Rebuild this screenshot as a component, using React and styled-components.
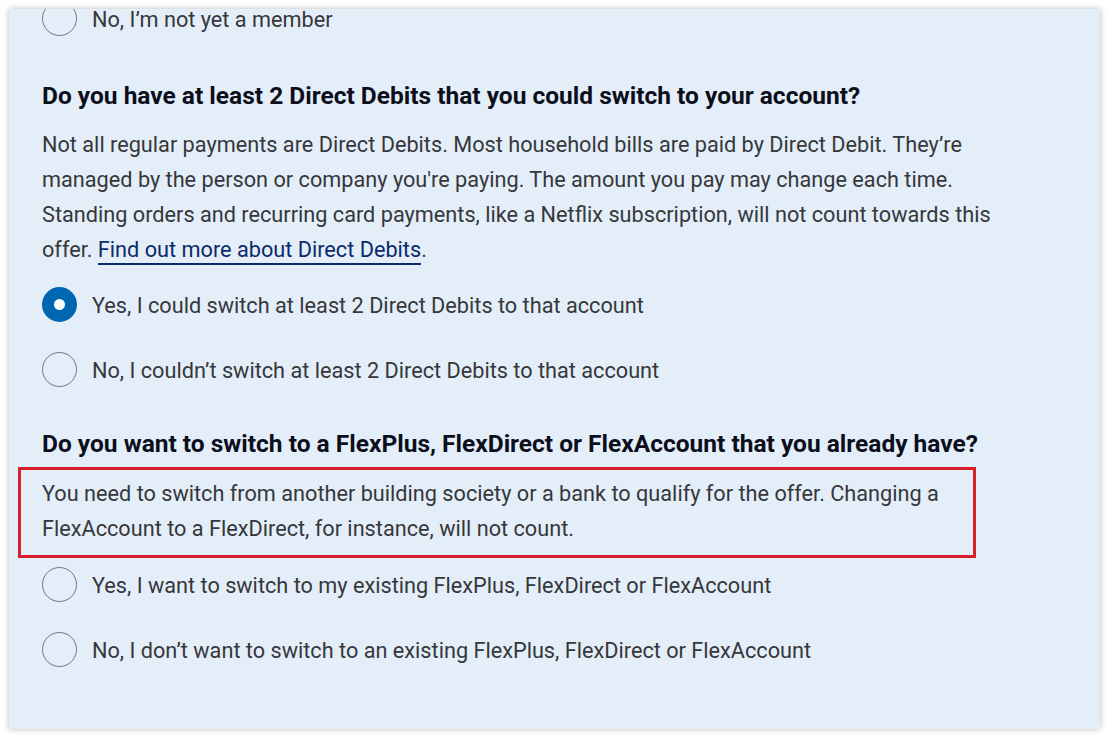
import React from "react";
import styled, { createGlobalStyle } from "styled-components";

const GlobalStyle = createGlobalStyle`
    html, body {
        margin: 0;
        padding: 0;
        background: #ffffff;
    }
    * {
        box-sizing: border-box;
    }
`;

const Page = styled.div`
    width: 1108px;
    height: 737px;
    padding: 9px 8px 8px 9px;
`;

const Panel = styled.section`
    height: 720px;
    background: #e3eef8;
    box-shadow: 0 0 6px rgba(0, 0, 0, 0.28);
    overflow: hidden;
    padding: 0 0 0 33px;
    font-family: Roboto, "Liberation Sans", sans-serif;
    color: #36373b;
`;

const Content = styled.div`
    margin-top: -8px;
    width: 975px;
    display: flex;
    flex-direction: column;
`;

const Question = styled.fieldset`
    border: 0;
    margin: ${({ $top }) => $top}px 0 0;
    padding: 0;
    display: flex;
    flex-direction: column;
`;

const Heading = styled.h2`
    margin: 0;
    font-size: 24.5px;
    line-height: 30px;
    font-weight: 700;
    color: #0d0e1c;
    white-space: nowrap;
`;

const Body = styled.p`
    margin: ${({ $top }) => $top || 0}px 0 0;
    padding-top: 1px;
    font-size: 21.7px;
    line-height: 35px;
`;

const Highlight = styled.div`
    margin: 8px 0 0 -24px;
    width: 958px;
    border: 3px solid #da1d2b;
    padding: 5px 0 9px 21px;
`;

const Link = styled.a`
    color: #0b2a6b;
    text-decoration: none;
    border-bottom: 2px solid #0b2a6b;
    padding-bottom: 1px;
`;

const Options = styled.div`
    display: flex;
    flex-direction: column;
    gap: 30px;
    margin-top: ${({ $top }) => $top}px;
`;

const Option = styled.label`
    display: flex;
    align-items: center;
    gap: 15px;
    height: 35px;
    font-size: 21.7px;
`;

const OptionText = styled.span`
    padding-top: 2px;
`;

const Radio = styled.span`
    flex: none;
    width: 35px;
    height: 35px;
    border-radius: 50%;
    border: ${({ $checked }) => ($checked ? "12px solid #0066b2" : "1.5px solid #74777c")};
    background: ${({ $checked }) => ($checked ? "#ffffff" : "transparent")};
`;

function RadioOption({ checked, children }) {
    return (
        <Option>
            <Radio $checked={checked} />
            <OptionText>{children}</OptionText>
        </Option>
    );
}

export default function App() {
    return (
        <>
            <GlobalStyle />
            <Page>
                <Panel>
                    <Content>
                        <Options $top={0}>
                            <RadioOption>No, I’m not yet a member</RadioOption>
                        </Options>

                        <Question $top={45}>
                            <Heading>Do you have at least 2 Direct Debits that you could switch to your account?</Heading>
                            <Body $top={15}>
                                Not all regular payments are Direct Debits. Most household bills are paid by Direct Debit. They’re managed by the person or company you're paying. The amount you pay may change each time. Standing orders and recurring card payments, like a Netflix subscription, will not count towards this offer. <Link href="#">Find out more about Direct Debits</Link>.
                            </Body>
                            <Options $top={20}>
                                <RadioOption checked>Yes, I could switch at least 2 Direct Debits to that account</RadioOption>
                                <RadioOption>No, I couldn’t switch at least 2 Direct Debits to that account</RadioOption>
                            </Options>
                        </Question>

                        <Question $top={42}>
                            <Heading>Do you want to switch to a FlexPlus, FlexDirect or FlexAccount that you already have?</Heading>
                            <Highlight>
                                <Body>
                                    You need to switch from another building society or a bank to qualify for the offer. Changing a FlexAccount to a FlexDirect, for instance, will not count.
                                </Body>
                            </Highlight>
                            <Options $top={9}>
                                <RadioOption>Yes, I want to switch to my existing FlexPlus, FlexDirect or FlexAccount</RadioOption>
                                <RadioOption>No, I don’t want to switch to an existing FlexPlus, FlexDirect or FlexAccount</RadioOption>
                            </Options>
                        </Question>
                    </Content>
                </Panel>
            </Page>
        </>
    );
}
